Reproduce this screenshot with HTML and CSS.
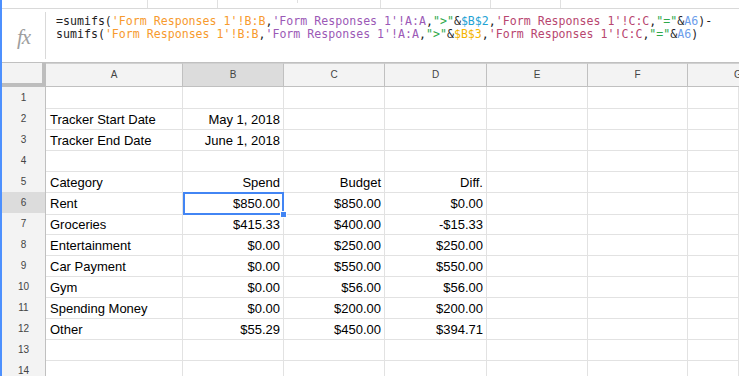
FILE: index.html
```html
<!DOCTYPE html>
<html lang="en">
<head>
    <meta charset="UTF-8">
    <title>Budget Tracker - Sheets</title>
    <link rel="stylesheet" href="styles.css">
</head>
<body>
    <div class="app">
        <div class="toolbar-edge">
            <span class="tick t1"></span>
            <span class="tick t2"></span>
            <span class="tick t3"></span>
            <span class="tick t4"></span>
            <span class="tick t5"></span>
            <span class="tick t6"></span>
        </div>

        <div class="formula-bar">
            <div class="fx">fx</div>
            <div class="formula">
                <div>=sumifs(<span class="f-orange">'Form Responses 1'!B:B</span>,<span class="f-purple">'Form Responses 1'!A:A</span>,<span class="f-green">"&gt;"</span>&amp;<span class="f-teal">$B$2</span>,<span class="f-pink">'Form Responses 1'!C:C</span>,<span class="f-green">"="</span>&amp;<span class="f-blue">A6</span>)-</div>
                <div>sumifs(<span class="f-orange">'Form Responses 1'!B:B</span>,<span class="f-purple">'Form Responses 1'!A:A</span>,<span class="f-green">"&gt;"</span>&amp;<span class="f-yellow">$B$3</span>,<span class="f-pink">'Form Responses 1'!C:C</span>,<span class="f-green">"="</span>&amp;<span class="f-blue">A6</span>)</div>
            </div>
        </div>

        <div class="sheet">
            <div class="row head">
                <div class="corner"></div>
                <div class="col-h">A</div>
                <div class="col-h active">B</div>
                <div class="col-h">C</div>
                <div class="col-h">D</div>
                <div class="col-h">E</div>
                <div class="col-h">F</div>
                <div class="col-h clip"><span>G</span></div>
            </div>

            <div class="row"><div class="row-h">1</div><div class="c"></div><div class="c"></div><div class="c"></div><div class="c"></div><div class="c"></div><div class="c"></div><div class="c"></div></div>
            <div class="row"><div class="row-h">2</div><div class="c">Tracker Start Date</div><div class="c num">May 1, 2018</div><div class="c"></div><div class="c"></div><div class="c"></div><div class="c"></div><div class="c"></div></div>
            <div class="row"><div class="row-h">3</div><div class="c">Tracker End Date</div><div class="c num">June 1, 2018</div><div class="c"></div><div class="c"></div><div class="c"></div><div class="c"></div><div class="c"></div></div>
            <div class="row"><div class="row-h">4</div><div class="c"></div><div class="c"></div><div class="c"></div><div class="c"></div><div class="c"></div><div class="c"></div><div class="c"></div></div>
            <div class="row"><div class="row-h">5</div><div class="c">Category</div><div class="c num">Spend</div><div class="c num">Budget</div><div class="c num">Diff.</div><div class="c"></div><div class="c"></div><div class="c"></div></div>
            <div class="row"><div class="row-h active">6</div><div class="c">Rent</div><div class="c num selected">$850.00<span class="handle"></span></div><div class="c num">$850.00</div><div class="c num">$0.00</div><div class="c"></div><div class="c"></div><div class="c"></div></div>
            <div class="row"><div class="row-h">7</div><div class="c">Groceries</div><div class="c num">$415.33</div><div class="c num">$400.00</div><div class="c num">-$15.33</div><div class="c"></div><div class="c"></div><div class="c"></div></div>
            <div class="row"><div class="row-h">8</div><div class="c">Entertainment</div><div class="c num">$0.00</div><div class="c num">$250.00</div><div class="c num">$250.00</div><div class="c"></div><div class="c"></div><div class="c"></div></div>
            <div class="row"><div class="row-h">9</div><div class="c">Car Payment</div><div class="c num">$0.00</div><div class="c num">$550.00</div><div class="c num">$550.00</div><div class="c"></div><div class="c"></div><div class="c"></div></div>
            <div class="row"><div class="row-h">10</div><div class="c">Gym</div><div class="c num">$0.00</div><div class="c num">$56.00</div><div class="c num">$56.00</div><div class="c"></div><div class="c"></div><div class="c"></div></div>
            <div class="row"><div class="row-h">11</div><div class="c">Spending Money</div><div class="c num">$0.00</div><div class="c num">$200.00</div><div class="c num">$200.00</div><div class="c"></div><div class="c"></div><div class="c"></div></div>
            <div class="row"><div class="row-h">12</div><div class="c">Other</div><div class="c num">$55.29</div><div class="c num">$450.00</div><div class="c num">$394.71</div><div class="c"></div><div class="c"></div><div class="c"></div></div>
            <div class="row"><div class="row-h">13</div><div class="c"></div><div class="c"></div><div class="c"></div><div class="c"></div><div class="c"></div><div class="c"></div><div class="c"></div></div>
            <div class="row"><div class="row-h">14</div><div class="c"></div><div class="c"></div><div class="c"></div><div class="c"></div><div class="c"></div><div class="c"></div><div class="c"></div></div>
        </div>
    </div>
</body>
</html>
```

FILE: styles.css
```css
* {
    margin: 0;
    padding: 0;
    box-sizing: border-box;
}

body {
    font-family: "Liberation Sans", Arial, sans-serif;
    background: white;
    color: #222;
    overflow: hidden;
}

.app {
    width: 739px;
    height: 376px;
    border-left: 2px solid #4d90fe;
    overflow: hidden;
}

/* bottom edge of the toolbar */
.toolbar-edge {
    position: relative;
    height: 9px;
    border-bottom: 1px solid #d9d9d9;
}

.tick {
    position: absolute;
    top: 0;
    width: 1px;
    height: 8px;
    background: #e0e0e0;
}

.t1 { left: 145px; }
.t2 { left: 215px; }
.t3 { left: 295px; height: 3px; }
.t4 { left: 378px; }
.t5 { left: 488px; }
.t6 { left: 558px; }

.formula-bar {
    display: flex;
    height: 54px;
    border-bottom: 1px solid #c0c0c0;
}

.fx {
    width: 44px;
    margin: 3px 0;
    border-right: 1px solid #d9d9d9;
    font-family: "Liberation Serif", "Times New Roman", serif;
    font-style: italic;
    font-size: 21px;
    color: #9e9e9e;
    text-align: center;
    padding-top: 13px;
    letter-spacing: -1px;
}

.formula {
    padding: 6px 0 0 10px;
    font-family: "DejaVu Sans Mono", "Liberation Mono", monospace;
    font-size: 11.6px;
    line-height: 13px;
    color: #222;
    white-space: nowrap;
}

.f-orange { color: #f79a2e; }
.f-purple { color: #9b59b6; }
.f-green { color: #2ea84a; }
.f-teal { color: #1fa3d4; }
.f-yellow { color: #f4b400; }
.f-pink { color: #b8466f; }
.f-blue { color: #6d9eeb; }

.row {
    display: grid;
    grid-template-columns: 44px 137px 101px 101px 102px 101px 100px 51px;
    height: 21px;
}

.row.head {
    height: 24px;
}

.corner {
    background: #f3f3f3;
    border-right: 4px solid #bdbdbd;
    border-bottom: 4px solid #bdbdbd;
}

.col-h {
    background: #f3f3f3;
    border-right: 1px solid #c0c0c0;
    border-bottom: 1px solid #c0c0c0;
    border-top: 1px solid #d0d0d0;
    font-size: 10px;
    color: #444;
    text-align: center;
    line-height: 22px;
}

.col-h.active,
.row-h.active {
    background: #dcdcdc;
}

.col-h.clip {
    position: relative;
    overflow: hidden;
    border-right: none;
}

/* column G is cut by the window edge */
.col-h.clip span {
    position: absolute;
    left: 46px;
}

.row-h {
    background: #f3f3f3;
    border-right: 1px solid #c0c0c0;
    border-bottom: 1px solid #d8d8d8;
    font-size: 10px;
    color: #444;
    text-align: center;
    line-height: 21px;
}

.c {
    border-right: 1px solid #e2e2e2;
    border-bottom: 1px solid #e2e2e2;
    font-size: 13px;
    line-height: 20px;
    padding: 2px 3px 0 4px;
    white-space: nowrap;
    overflow: hidden;
    color: #000;
}

.num {
    text-align: right;
}

.selected {
    position: relative;
    overflow: visible;
    outline: 2px solid #4285f4;
    outline-offset: -2px;
}

.handle {
    position: absolute;
    right: -4px;
    bottom: -4px;
    width: 7px;
    height: 7px;
    background: #4285f4;
    border: 1px solid white;
}
```
